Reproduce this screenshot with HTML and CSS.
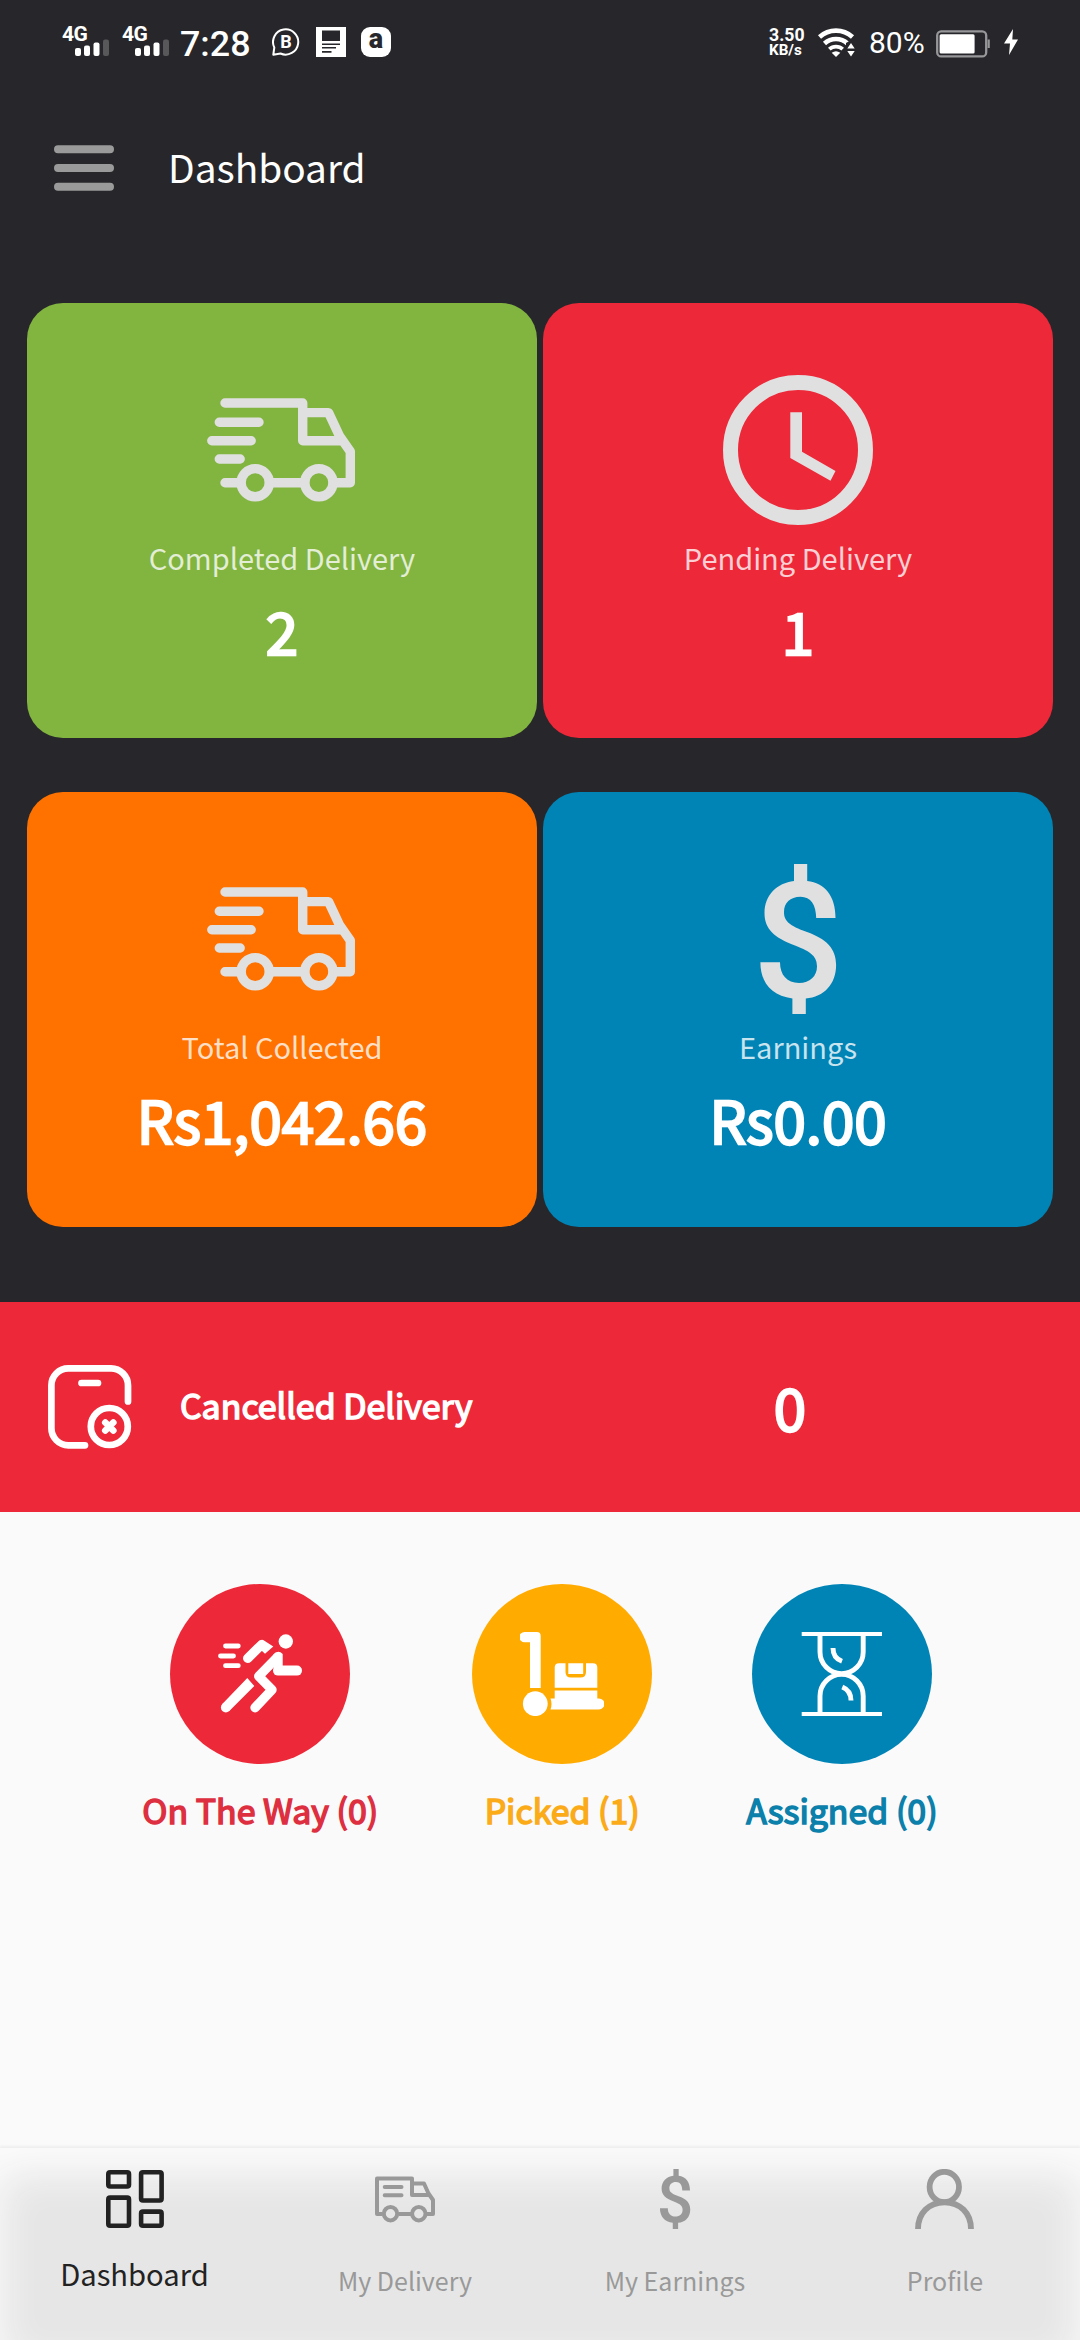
FILE: index.html
```html
<!DOCTYPE html>
<html lang="en">
<head>
<meta charset="utf-8">
<title>Dashboard</title>
<link rel="stylesheet" href="styles.css">
</head>
<body>
<svg class="defs" aria-hidden="true">
  <symbol id="van" viewBox="0 0 150 150">
    <g fill="none" stroke="currentColor" stroke-width="9.4" stroke-linecap="round" stroke-linejoin="round">
      <path d="M18 28H95.7V65.7H133M95.7 37.6H121.5L132.5 61L143.3 76.5V107.7H126.1M97.7 107.7H62.4M34 107.7H18"/>
      <path d="M12.3 47.3H52M4.8 65.7H44.2M12.3 84H33.2"/>
      <circle cx="48.2" cy="107.7" r="14.1"/><circle cx="111.9" cy="107.7" r="14.1"/>
    </g>
  </symbol>
  <symbol id="dollar" viewBox="0 0 150 150">
    <path fill="currentColor" d="M112.5 54H93.2C93 41 88 32.7 77.5 32.7C67 32.7 61 39 61 48C61 57 66 61.500 84 68C103 75 113.100 84 113.100 101C113.100 120 101 133 82.800 134.500V150H69.400V134.500C49 132 37.400 119 37.400 98.300H57C57 111 64 119 76 119C87 119 94 112 94 102.500C94 93 89 88 72 81.500C51 73.500 41.500 65 41.500 49C41.500 31 54 19 71 17V0H84.200V17C102 19 112.500 32 112.500 54Z"/>
  </symbol>
  <symbol id="signal" viewBox="0 0 50 34">
    <rect x="13" y="23" width="6" height="8" rx="2"/><rect x="22" y="20.500" width="6" height="10.500" rx="2"/><rect x="31.500" y="17.500" width="6" height="13.500" rx="2"/><rect x="41" y="14.500" width="6" height="16.500" rx="2" fill="#58585b"/>
  </symbol>
</svg>
<div class="screen">
  <section class="hero">
    <div class="status">
      <div class="status-left">
        <div class="cell"><svg viewBox="0 0 50 34"><use href="#signal"/></svg><span class="net">4G</span></div>
        <div class="cell"><svg viewBox="0 0 50 34"><use href="#signal"/></svg><span class="net">4G</span></div>
        <span class="time">7:28</span>
        <span class="chat"><svg viewBox="0 0 28 28" fill="none" stroke="#fff" stroke-width="2"><path d="M1.300 26.700L2.300 19.500A12.600 12.600 0 1 1 8.500 25.500Z" stroke-linejoin="round"/></svg><b>B</b></span>
        <svg class="doc" viewBox="0 0 30 30"><path fill="#fff" d="M0 0H30V30H0Z"/><path fill="#27272b" d="M6 3.500H24V14H6ZM6 16.500H24V18H6ZM6 20H20V21.500H6ZM6 24H15.500V25.700H6Z"/></svg>
        <span class="app">a</span>
      </div>
      <div class="status-right">
        <span class="speed"><b>3.50</b><i>KB/s</i></span>
        <svg class="wifi" viewBox="0 0 37 30"><g fill="none" stroke="#fff" stroke-width="4.600"><path d="M1.500 9A24.500 24.500 0 0 1 34.500 9"/><path d="M6.500 15.500A17 17 0 0 1 29.500 15.500"/><path d="M11.300 21.200A9.800 9.800 0 0 1 24.700 21.200" stroke-width="3.800"/></g><path fill="#fff" d="M18 29L13.700 24.800Q18 21.500 22.300 24.800Z"/><path d="M28 30V15L33 12L37 20V30Z" fill="#27272b"/><path fill="#fff" d="M33 15L36.700 20.600H29.300ZM33 28.500L29.300 23H36.700Z"/></svg>
        <span class="pct">80%</span>
        <svg class="battery" viewBox="0 0 54 28"><rect x="1.200" y="1.400" width="49" height="25" rx="4" fill="none" stroke="#97979a" stroke-width="2.300"/><path fill="#97979a" d="M51.600 9.500H53.800V18H51.600Z"/><rect x="3.600" y="4.200" width="35" height="19.300" rx="1.500" fill="#fff"/></svg>
        <svg class="bolt" viewBox="0 0 14 26"><path fill="#fff" d="M9 0L0 14.500H6L5 26L14 10.500H8.300Z"/></svg>
      </div>
    </div>
    <header class="topbar">
      <svg class="menu" viewBox="0 0 60 46"><path d="M4 4.200H56M4 23H56M4 41.800H56" stroke="#9a9a9b" stroke-width="8" stroke-linecap="round"/></svg>
      <h1>Dashboard</h1>
    </header>
    <div class="cards">
      <article class="card green"><svg class="card-icon"><use href="#van"/></svg><span class="label">Completed Delivery</span><strong>2</strong></article>
      <article class="card red">
        <svg class="card-icon" viewBox="0 0 150 150"><circle cx="75" cy="75" r="67.500" fill="none" stroke="currentColor" stroke-width="15"/><path fill="currentColor" d="M67.300 37.300H79V76.700L112.500 96L107.500 105.800L67.300 83Z"/></svg>
        <span class="label">Pending Delivery</span><strong>1</strong></article>
      <article class="card orange"><svg class="card-icon"><use href="#van"/></svg><span class="label">Total Collected</span><strong>Rs1,042.66</strong></article>
      <article class="card blue"><svg class="card-icon"><use href="#dollar"/></svg><span class="label">Earnings</span><strong>Rs0.00</strong></article>
    </div>
  </section>
  <section class="cancelled">
    <svg viewBox="0 0 84 84" fill="none" stroke="#fff" stroke-width="6.700" stroke-linecap="round"><path d="M37 80.300H20.500A17 17 0 0 1 3.400 63V20.500A17 17 0 0 1 20.500 3.400H63A17 17 0 0 1 80 20.500V36.500M33.500 18H50"/><circle cx="61.300" cy="61.500" r="18.500"/><path d="M57.300 57.500L65.300 65.500M65.300 57.500L57.300 65.500"/></svg>
    <span>Cancelled Delivery</span>
    <strong>0</strong>
  </section>
  <section class="states">
    <div class="state on-way">
      <div class="disc"><svg viewBox="0 0 84 84"><g fill="none" stroke="#fff" stroke-linejoin="round"><path d="M7.500 14H20.300M2.500 24H15.500M7.500 33.700H20.300" stroke-width="4.800" stroke-linecap="round"/><path d="M29.700 26.300L43.300 13" stroke-width="9.400" stroke-linecap="round"/><path d="M59.300 25.300L40.700 44.200L54 57.700L37 75.700" stroke-width="9.400" stroke-linecap="round"/><path d="M60 38.600H79" stroke-width="10" stroke-linecap="round"/></g><circle cx="67.800" cy="9.500" r="7.200" fill="#fff"/><circle cx="7.800" cy="75.500" r="4.900" fill="#fff"/><path fill="#fff" d="M4.300 72.100L29.300 46L36.300 54L11.300 79ZM40 10.200Q43.300 6.500 46 8.500L55.300 14.500L47 21.700L44 19L38 19ZM55 23Q60 17 64.700 22V35L56 40Z"/></svg></div>
      <span>On The Way (0)</span>
    </div>
    <div class="state picked">
      <div class="disc"><svg viewBox="0 0 84 84" fill="#fff"><path d="M4.500 0H17Q20.700 0 20.700 4V56H10V10.300H4.500A5 5 0 0 1 4.500 0Z"/><circle cx="15.300" cy="71.700" r="12.400"/><path d="M39 31.200H45.500V40Q45.500 45.500 51 45.500H60.500Q66 45.500 66 40V31.200H73Q77.300 31.200 77.300 35.500V55.800H34.700V35.500Q34.700 31.200 39 31.200ZM48.300 31.200H63.200V42H48.300ZM34.700 58.500H77.300V66.500H79A5.300 5.300 0 0 1 79 77.400H30.500Q32.500 72 30.500 66.500H34.700Z"/></svg></div>
      <span>Picked (1)</span>
    </div>
    <div class="state assigned">
      <div class="disc"><svg viewBox="0 0 84 84" fill="none" stroke="#fff"><path d="M1.700 2H82M1.700 82H82" stroke-width="4"/><path d="M20 4V20A21.600 21.600 0 0 0 63.200 20V4M20 80V64A21.600 21.600 0 0 1 63.200 64V80" stroke-width="4.900"/><path d="M33 16Q33 26 42 29.300M42.300 55Q51 58.500 51 68.500" stroke-width="4.900"/></svg></div>
      <span>Assigned (0)</span>
    </div>
  </section>
  <nav class="tabs">
    <a class="tab active"><svg viewBox="0 0 60 60" fill="none" stroke="currentColor" stroke-width="4.600"><rect x="3.300" y="3.300" width="20.700" height="14.200" rx="1.800"/><rect x="36.100" y="3.300" width="20.500" height="28.200" rx="1.800"/><rect x="3.300" y="28.600" width="20.700" height="28.200" rx="1.800"/><rect x="36.100" y="42.600" width="20.500" height="14.200" rx="1.800"/></svg><span>Dashboard</span></a>
    <a class="tab"><svg viewBox="0 0 60 60" fill="none" stroke="currentColor" stroke-width="4" stroke-linejoin="round"><path d="M7.500 45H2V9.500H37V26H54M37 14.500H49L53.500 24.500L58 31V45H51.500M36 45H23.500" /><path d="M9.700 18H26.500M9.700 26.200H26.500" stroke-linecap="round"/><circle cx="15.500" cy="44.700" r="6.700"/><circle cx="43.800" cy="44.700" r="6.700"/></svg><span>My Delivery</span></a>
    <a class="tab"><svg><use href="#dollar"/></svg><span>My Earnings</span></a>
    <a class="tab"><svg viewBox="0 0 60 60" fill="none" stroke="currentColor" stroke-width="5.800"><ellipse cx="29.300" cy="18" rx="14.700" ry="15.200"/><path d="M3 60C3 44 14 33.300 29.500 33.300S56 44 56 60"/></svg><span>Profile</span></a>
  </nav>
</div>
</body>
</html>
```
FILE: styles.css
```css
* { box-sizing: border-box; }
body { margin: 0; font-family: "Noto Sans CJK JP", "Noto Sans", sans-serif; }
h1 { margin: 0; font-weight: 400; }
.defs { position: absolute; width: 0; height: 0; }
.screen { width: 1080px; height: 2340px; display: flex; flex-direction: column; background: #fafafa; overflow: hidden; }

/* Dark upper area */
.hero { height: 1302px; background: #27272b; color: #fff; flex: none; }
.status { height: 84px; display: flex; justify-content: space-between; padding: 0 62px; font-family: Roboto, sans-serif; }
.status-left, .status-right { display: flex; align-items: center; }
.cell { position: relative; width: 50px; height: 34px; margin-right: 10px; }
.cell svg { display: block; width: 50px; height: 34px; fill: #fff; }
.net { position: absolute; left: 0; top: 0; font-size: 21px; line-height: 19px; font-weight: 700; letter-spacing: -0.5px; }
.time { font-size: 35.8px; font-weight: 500; line-height: 42px; width: 92px; margin-left: -2px; padding-top: 3px; }
.chat { position: relative; width: 28px; height: 28px; display: grid; place-items: center; margin-right: 16px; }
.chat svg { position: absolute; width: 28px; height: 28px; }
.chat b { font-size: 18px; line-height: 28px; }
.doc { width: 30px; height: 30px; margin-right: 15px; }
.app { width: 30px; height: 30px; border-radius: 9px; background: #fff; color: #27272b; font: 900 27px/24px Roboto, sans-serif; text-align: center; }
.speed { display: flex; flex-direction: column; width: 49px; }
.speed b { font-size: 17.7px; line-height: 15px; margin-top: 1px; }
.speed i { font-size: 15.2px; line-height: 15px; font-style: normal; font-weight: 700; }
.wifi { width: 37px; height: 30px; margin-top: 2px; }
.pct { font-size: 30px; line-height: 36px; width: 67px; margin-left: 14px; padding-top: 1px; }
.battery { width: 54px; height: 28px; margin-top: 3px; }
.bolt { width: 14px; height: 26px; margin-left: 14px; }

.topbar { height: 219px; display: flex; align-items: flex-start; padding: 61px 54px 0; }
.menu { width: 60px; height: 46px; fill: none; }
.topbar h1 { font-size: 38.8px; line-height: 56px; margin-left: 54px; margin-top: -7px; }

.cards { display: grid; grid-template-columns: 510px 510px; grid-auto-rows: 435px; gap: 54px 6px; padding: 0 27px; }
.card { border-radius: 36px; display: flex; flex-direction: column; align-items: center; padding-top: 72px; }
.green { background: #82b440; }
.red { background: #ed2839; }
.orange { background: #ff7200; }
.blue { background: #0084b6; }
.card-icon { width: 150px; height: 150px; color: #e0e0e0; }
.label { font-size: 29px; line-height: 42px; margin-top: 11px; color: rgba(255, 255, 255, 0.78); }
strong { font-weight: 400; font-size: 58.2px; line-height: 85px; -webkit-text-stroke: 2.4px currentColor; }
.card strong { margin-top: 9px; }

/* Cancelled banner */
.cancelled { flex: none; height: 210px; display: grid; grid-template-columns: 132px 320px 580px; align-items: center; padding-left: 48px; background: #ed2839; color: #fff; }
.cancelled svg { width: 84px; height: 84px; }
.cancelled span { font-size: 33.9px; line-height: 50px; padding-bottom: 5px; -webkit-text-stroke: 1.5px currentColor; }
.cancelled strong { text-align: center; padding-bottom: 3px; }

/* Delivery states */
.states { flex: 1; display: flex; justify-content: center; align-items: flex-start; gap: 94px; padding-top: 72px; }
.state { display: flex; flex-direction: column; align-items: center; }
.disc { width: 180px; height: 180px; border-radius: 50%; display: grid; place-items: center; background: currentColor; }
.disc svg { width: 84px; height: 84px; }
.state span { font-size: 33.9px; line-height: 50px; margin-top: 21px; white-space: nowrap; -webkit-text-stroke: 1.5px currentColor; }
.on-way { color: #ed2839; }
.on-way span { color: #de2f40; }
.picked { color: #ffab00; width: 180px; }
.picked span { color: #fbab18; }
.assigned { color: #0084b6; }
.assigned span { color: #0a80ab; }

/* Bottom tabs */
.tabs { flex: none; height: 192px; display: grid; grid-template-columns: repeat(4, 270px); background: #e6e6e6; box-shadow: inset 0 25px 40px #fcfcfc, 0 -2px 2px #eeeeee; }
.tab { display: flex; flex-direction: column; align-items: center; padding-top: 21px; color: #999; }
.tab svg { width: 60px; height: 60px; }
.tab span { font-size: 25px; line-height: 36px; margin-top: 33px; }
.tab.active { color: #222; padding-right: 1px; }
.tab.active span { font-size: 29.2px; line-height: 42px; margin-top: 23px; }
```
